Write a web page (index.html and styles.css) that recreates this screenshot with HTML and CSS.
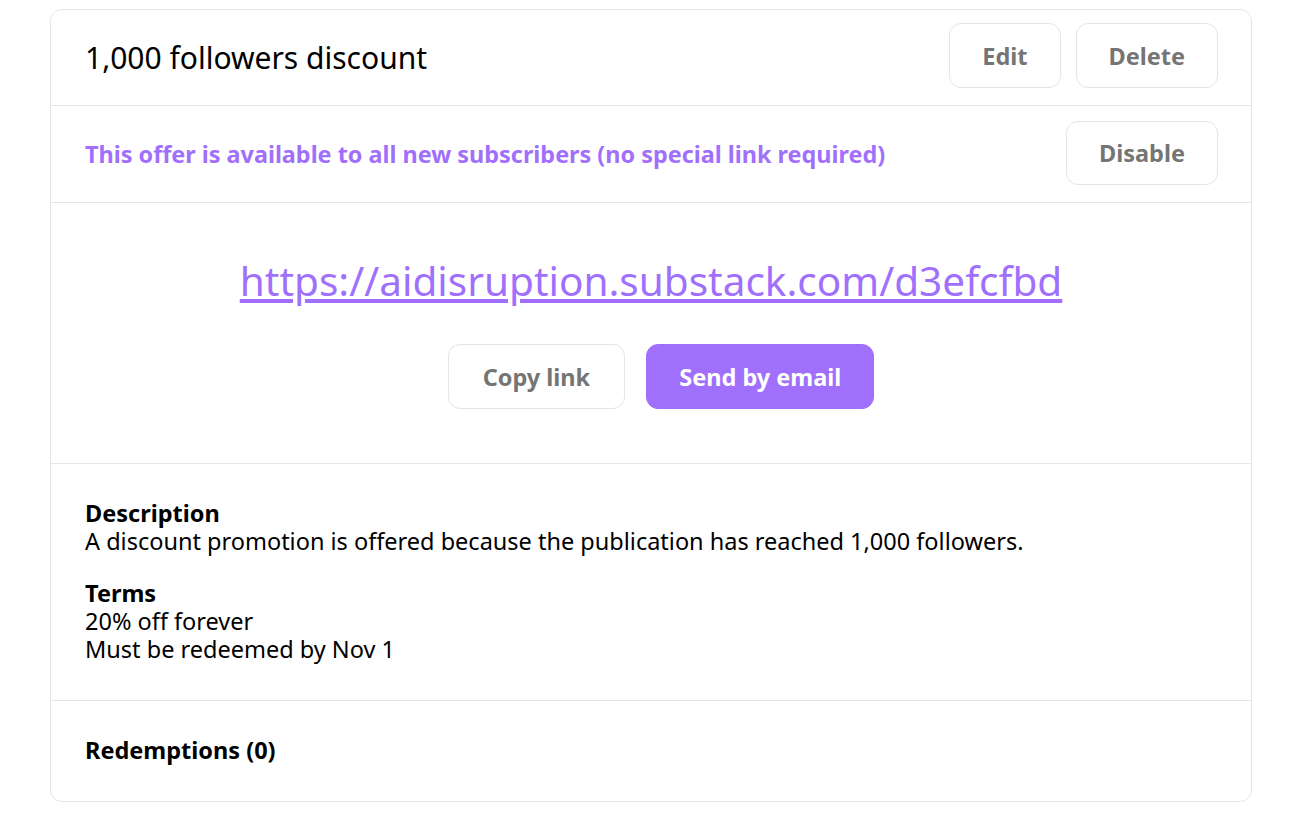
FILE: index.html
```html
<!DOCTYPE html>
<html lang="en">

<head>
    <meta charset="UTF-8">
    <meta name="viewport" content="width=device-width, initial-scale=1.0">
    <title>1,000 followers discount</title>

    <link rel="stylesheet" href="styles.css">
</head>

<body>
    <div class="offer-card">
        <div class="offer-header">
            <h1>1,000 followers discount</h1>
            <div class="actions">
                <button class="btn">Edit</button>
                <button class="btn">Delete</button>
            </div>
        </div>

        <div class="offer-status">
            <p>This offer is available to all new subscribers (no special link required)</p>
            <button class="btn">Disable</button>
        </div>

        <div class="offer-link">
            <a href="#">https://aidisruption.substack.com/d3efcfbd</a>
            <div class="link_buttons">
                <button class="btn btn-copy">Copy link</button>
                <button class="btn btn-primary">Send by email</button>
            </div>
        </div>

        <div class="offer-details">
            <h3>Description</h3>
            <p>A discount promotion is offered because the publication has reached 1,000 followers.</p>
            <h3 class="terms">Terms</h3>
            <p>20% off forever</p>
            <p>Must be redeemed by Nov 1</p>
        </div>

        <div class="offer-redemptions">
            <h3>Redemptions (0)</h3>
        </div>
    </div>
</body>

</html>
```

FILE: styles.css
```css
body {
    margin: 0;
    font-family: "Noto Sans", "Open Sans", sans-serif;
    color: #000;
    background-color: #fff;
}

.offer-card {
    width: 1200px;
    margin: 9px 0 0 50px;
    border: 1px solid #e6e6e6;
    border-radius: 12px;
}

.offer-card > div {
    border-bottom: 1px solid #e6e6e6;
}

.offer-card > div:last-child {
    border-bottom: none;
}

.offer-header,
.offer-status {
    display: flex;
    align-items: center;
    justify-content: space-between;
    padding: 0 33px 0 34px;
}

.offer-header {
    height: 95px;
}

.offer-header h1 {
    margin: 0;
    font-size: 30px;
    font-weight: 400;
}

.actions {
    display: flex;
    gap: 15px;
    margin-bottom: 4px;
}

.offer-status {
    height: 96px;
}

.offer-status p {
    margin: 0;
    font-size: 23.4px;
    font-weight: 700;
    color: #a070fd;
}

.offer-status .btn {
    height: 64px;
    margin-bottom: 2px;
}

.btn {
    height: 65px;
    padding: 0 32px;
    border: 1px solid #e5e5e5;
    border-radius: 12px;
    background-color: #fff;
    font-family: inherit;
    font-size: 23.5px;
    font-weight: 700;
    color: #757575;
}

.offer-link {
    padding: 50px 0 54px;
    text-align: center;
}

.offer-link a {
    display: block;
    line-height: 56px;
    font-size: 40.5px;
    color: #a070fd;
    margin-bottom: 35px;
}

.link_buttons {
    display: flex;
    justify-content: center;
    gap: 21px;
    padding-left: 20px;
}

.link_buttons .btn-copy {
    padding: 0 34px;
}

.btn-primary {
    border-color: #a070fd;
    background-color: #a070fd;
    color: #fff;
}

.offer-details {
    padding: 35px 34px 37px;
    font-size: 23.5px;
    line-height: 28px;
}

.offer-details h3,
.offer-redemptions h3 {
    margin: 0;
    font-size: 23.5px;
    line-height: 28px;
}

.offer-details p {
    margin: 0;
}

.offer-details .terms {
    margin-top: 24px;
}

.offer-redemptions {
    padding: 35px 34px 37px;
}
```
